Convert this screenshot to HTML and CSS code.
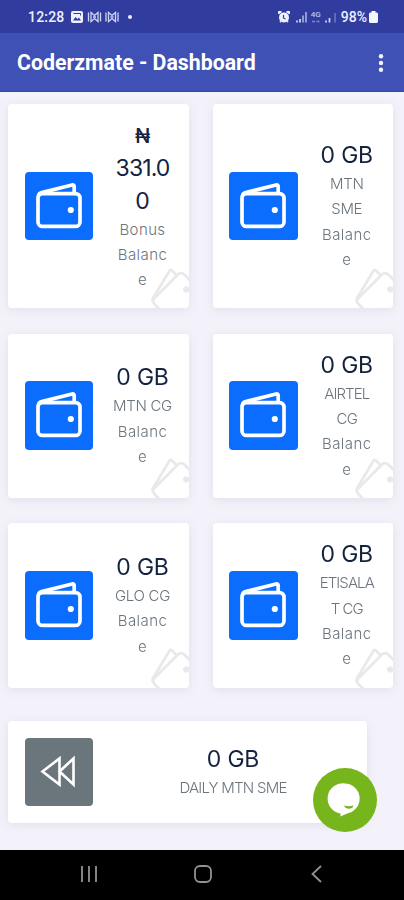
FILE: index.html
```
<!DOCTYPE html>
<html lang="en">
<head>
<meta charset="utf-8">
<title>Coderzmate - Dashboard</title>
<link rel="stylesheet" href="styles.css">
</head>
<body>
<svg class="defs" aria-hidden="true">
  <symbol id="wallet" viewBox="0 0 68 68">
    <rect x="13" y="21.600" width="42" height="32.800" rx="4.500"/>
    <path d="M13.500 24q.3-2.600 3.200-3.400L47 13q2.200-.4 2.200 1.800v6"/>
    <circle cx="45.800" cy="38" r="3.100" class="dot"/>
  </symbol>
</svg>
<div class="status">
  <div class="group">
    <span class="clock">12:28</span>
    <svg class="s-img" viewBox="0 0 12 12"><rect width="12" height="12" rx="2" fill="#eef0ff"/><path d="M2 9.500 4.500 6l2 2 1.500-1.500 2 3z" fill="#303d9f"/><path d="M2.500 2.500h7v2" fill="none" stroke="#303d9f"/></svg>
    <svg class="s-bow" viewBox="0 0 33 12" fill="none" stroke="#cfd4f5" stroke-width="1.300"><path d="M1.500 1.500v9M4 10.500v-9l3.500 3 3.500-3v9l-3.500-3zM13.500 1.500v9M6 6h3"/><path d="M19 1.500v9M21.500 10.500v-9l3.500 3 3.500-3v9l-3.500-3zM31 1.500v9M23.500 6h3"/></svg>
    <span class="bullet"></span>
  </div>
  <div class="group right">
    <svg class="s-alarm" viewBox="0 0 12 12"><circle cx="6" cy="6.400" r="5" fill="#eef0ff"/><path d="M1 3V1h2.500M8.500 1H11v2M2 11l1-1M10 11l-1-1" fill="none" stroke="#eef0ff" stroke-width="1.800"/><path d="M5.500 4v3l2 1" fill="none" stroke="#303d9f" stroke-width="1.200"/></svg>
    <svg class="s-sig" viewBox="0 0 11 12"><path d="M1 11.500v-2M4 11.500V8" stroke="#ccd1f2" stroke-width="1.800"/><path d="M7 11.500v-7M10 11.500V1" stroke="#9ba3dc" stroke-width="1.800"/></svg>
    <span class="net"><span>4G</span><svg viewBox="0 0 9 5"><path d="M1 2.500h3M5.500 2.500h3" stroke="#8088c9" stroke-width="1.500"/></svg></span>
    <svg class="s-sig" viewBox="0 0 11 12"><path d="M1 11.500v-2M4.500 11.500V7" stroke="#ccd1f2" stroke-width="1.800"/><path d="M10 11.500V2" stroke="#6d76c2" stroke-width="1.600"/></svg>
    <span class="pct">98%</span>
    <svg class="s-bat" viewBox="0 0 9 12"><path d="M2.500 0h4v1.500H8l1 1V11l-1 1H1l-1-1V2.500l1-1h1.500z" fill="#f4f5ff"/></svg>
  </div>
</div>
<header class="bar">
  <h1>Coderzmate - Dashboard</h1>
  <svg class="more" viewBox="0 0 6 18" fill="#f3f4ff"><circle cx="3" cy="2.300" r="2.200"/><circle cx="3" cy="9" r="2.200"/><circle cx="3" cy="15.700" r="2.200"/></svg>
</header>
<main>
  <section class="grid">
    <article class="card">
      <div class="tile"><svg><use href="#wallet"/></svg></div>
      <div class="info"><p class="value"><span class="naira">₦</span><br><span class="amount">331.0</span><br>0</p><p class="label">Bonus<br>Balanc<br>e</p></div>
      <svg class="mark"><use href="#wallet"/></svg>
    </article>
    <article class="card">
      <div class="tile"><svg><use href="#wallet"/></svg></div>
      <div class="info"><p class="value">0 GB</p><p class="label"><span class="caps">MTN<br>SME</span><br>Balanc<br>e</p></div>
      <svg class="mark"><use href="#wallet"/></svg>
    </article>
    <article class="card">
      <div class="tile"><svg><use href="#wallet"/></svg></div>
      <div class="info"><p class="value">0 GB</p><p class="label"><span class="caps">MTN CG</span><br>Balanc<br>e</p></div>
      <svg class="mark"><use href="#wallet"/></svg>
    </article>
    <article class="card">
      <div class="tile"><svg><use href="#wallet"/></svg></div>
      <div class="info"><p class="value">0 GB</p><p class="label"><span class="caps tight">AIRTEL<br>CG</span><br>Balanc<br>e</p></div>
      <svg class="mark"><use href="#wallet"/></svg>
    </article>
    <article class="card">
      <div class="tile"><svg><use href="#wallet"/></svg></div>
      <div class="info"><p class="value">0 GB</p><p class="label"><span class="caps">GLO CG</span><br>Balanc<br>e</p></div>
      <svg class="mark"><use href="#wallet"/></svg>
    </article>
    <article class="card">
      <div class="tile"><svg><use href="#wallet"/></svg></div>
      <div class="info"><p class="value">0 GB</p><p class="label"><span class="caps tight">ETISALA<br>T CG</span><br>Balanc<br>e</p></div>
      <svg class="mark"><use href="#wallet"/></svg>
    </article>
  </section>
  <article class="card wide">
    <div class="tile gray"><svg viewBox="0 0 68 68"><path d="M17.500 33.500 34.500 20.500v26zM34.500 33.500 48.500 20.500v26z" class="rewind"/></svg></div>
    <div class="info"><p class="value">0 GB</p><p class="label"><span class="caps daily">DAILY MTN SME</span></p></div>
  </article>
  <div class="chat"><svg viewBox="0 0 64 64"><path d="M32 15.500a15 15 0 0 1 3.500 29.500Q31 46.500 27.500 48.500V45.500A15 15 0 0 1 32 15.500z" fill="#fff"/><path d="M31 37.500q5 1.500 9.500 0-1 3.200-4.500 3.200T31 37.500z" fill="#76b51b"/></svg></div>
</main>
<nav class="keys">
  <svg viewBox="0 0 18 18"><path d="M2 1v16M9 1v16M16 1v16"/></svg>
  <svg viewBox="0 0 18 18"><rect x="1" y="1" width="16" height="16" rx="5"/></svg>
  <svg viewBox="0 0 18 18"><path d="M13 1 4.500 9l8.500 8"/></svg>
</nav>
</body>
</html>
```
FILE: styles.css
```
* { box-sizing: border-box; }
body {
  margin: 0;
  width: 404px;
  height: 900px;
  overflow: hidden;
  display: flex;
  flex-direction: column;
  background: #f3f2fa;
  font-family: Inter, "Liberation Sans", sans-serif;
}
.defs { position: absolute; width: 0; height: 0; }
svg { display: block; }

.status {
  height: 33px;
  flex: none;
  display: flex;
  justify-content: space-between;
  padding: 1px 26px 0 28px;
  background: #303d9f;
  color: #eef0ff;
  font: 500 14px/32px Roboto, sans-serif;
}
.group { display: flex; align-items: center; }
.clock { width: 43px; letter-spacing: .2px; }
.s-img { width: 12px; height: 12px; margin-right: 4px; }
.s-bow { width: 33px; height: 12px; }
.bullet { width: 4px; height: 4px; border-radius: 50%; background: #eef0ff; margin-left: 8px; }
.s-alarm { width: 12px; height: 12px; margin-right: 6px; }
.s-sig { width: 11px; height: 12px; }
.net { display: flex; flex-direction: column; align-items: center; width: 10px; margin: 0 4px; font-size: 8px; line-height: 8px; color: #bcc3ec; }
.net svg { width: 9px; height: 5px; }
.pct { margin: 0 2px 0 5px; }
.s-bat { width: 9px; height: 12px; }

.bar {
  height: 59px;
  flex: none;
  display: flex;
  align-items: center;
  justify-content: space-between;
  padding: 2px 20px 0 17px;
  background: #3f51b5;
  border-bottom: 1px solid #36459f;
}
.bar h1 { margin: 0; color: #fff; font: 700 21.300px/30px Roboto, sans-serif; }
.more { width: 6px; height: 18px; }

main { position: relative; height: 757.500px; flex: none; padding: 12px 11.500px 0 8px; }
.grid {
  display: grid;
  grid-template-columns: 180.500px 180px;
  grid-template-rows: 204px 164px 164.500px;
  gap: 25.500px 24px;
}
.card {
  position: relative;
  display: flex;
  align-items: center;
  padding: 0 16.500px;
  overflow: hidden;
  background: #fff;
  border-radius: 4px;
}
.grid, .wide { filter: drop-shadow(0 2px 5px rgba(60, 60, 100, .09)); }
.tile { width: 68.500px; height: 68.500px; flex: none; border-radius: 4px; background: #0b6dfd; }
.tile svg { width: 68px; height: 68px; fill: none; stroke: #fff; stroke-width: 3.700; }
.dot { fill: currentColor; stroke: none; }
.tile { color: #fff; }
.tile.gray { background: #6a757c; }
.tile .rewind { stroke-width: 2.600; }
.info { flex: 1; margin: 0 -10px 0 10px; text-align: center; white-space: nowrap; }
.info p { margin: 0; }
.value { color: #14233d; font-size: 23px; line-height: 32.500px; letter-spacing: -.2px; }
.amount { letter-spacing: -.9px; }
.naira { font-size: 20px; font-weight: 500; }
.label { position: relative; top: -.5px; color: #6c757d; font-size: 15px; line-height: 25.300px; font-weight: 300; letter-spacing: .4px; }
.caps { letter-spacing: -.3px; }
.caps.tight { letter-spacing: -.9px; }
.caps.daily { letter-spacing: -.75px; }
.mark {
  position: absolute;
  right: -20.500px;
  bottom: -21px;
  width: 68px;
  height: 68px;
  transform: rotate(-45deg);
  fill: none;
  stroke: #e9e9eb;
  stroke-width: 2.800;
  color: #e9e9eb;
}
.wide { width: 358.500px; height: 101.500px; margin-top: 33.500px; }
.wide .info { margin: 0 -1px 0 22px; }
.chat {
  position: absolute;
  left: 313px;
  top: 676px;
  width: 64px;
  height: 64px;
  border-radius: 50%;
  background: #76b51b;
}

.keys { flex: 1; display: flex; justify-content: center; gap: 96px; align-items: center; padding: 0 0 2px 2px; background: #000; }
.keys svg { width: 18px; height: 18px; fill: none; stroke: #929292; stroke-width: 1.800; }
```
